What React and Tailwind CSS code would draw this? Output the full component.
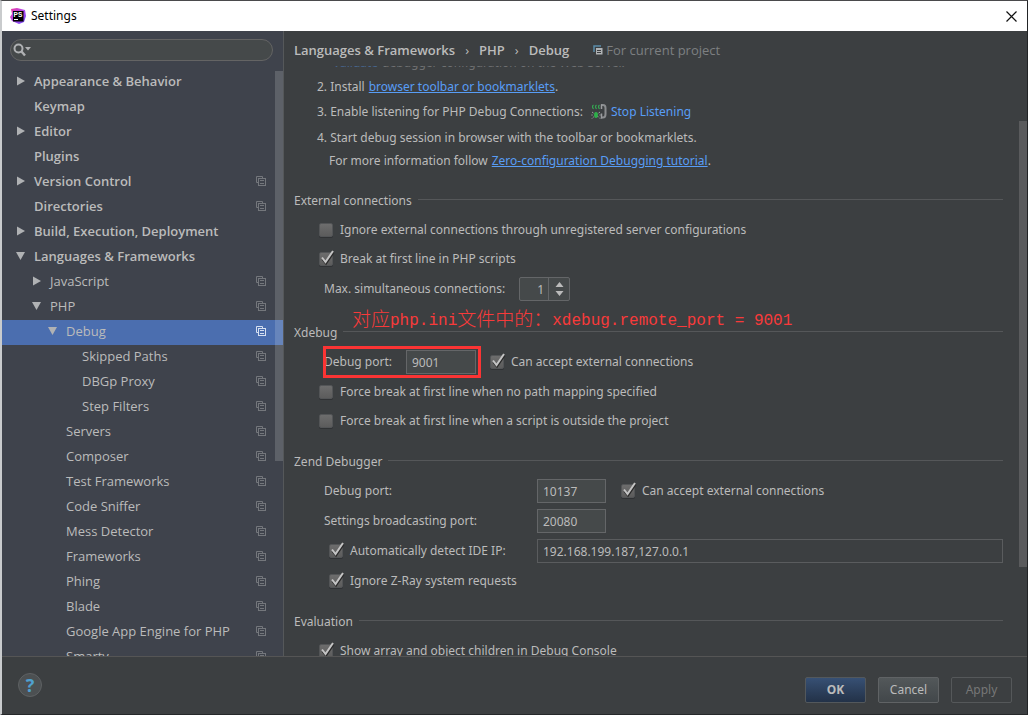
import React from 'react';

const treeItems = [
  { label: 'Appearance & Behavior', level: 0, arrow: 'right' },
  { label: 'Keymap', level: 0 },
  { label: 'Editor', level: 0, arrow: 'right' },
  { label: 'Plugins', level: 0 },
  { label: 'Version Control', level: 0, arrow: 'right', project: true },
  { label: 'Directories', level: 0, project: true },
  { label: 'Build, Execution, Deployment', level: 0, arrow: 'right' },
  { label: 'Languages & Frameworks', level: 0, arrow: 'down' },
  { label: 'JavaScript', level: 1, arrow: 'right', project: true },
  { label: 'PHP', level: 1, arrow: 'down', project: true },
  { label: 'Debug', level: 2, arrow: 'down', project: true, selected: true },
  { label: 'Skipped Paths', level: 3, project: true },
  { label: 'DBGp Proxy', level: 3, project: true },
  { label: 'Step Filters', level: 3, project: true },
  { label: 'Servers', level: 2, project: true },
  { label: 'Composer', level: 2, project: true },
  { label: 'Test Frameworks', level: 2, project: true },
  { label: 'Code Sniffer', level: 2, project: true },
  { label: 'Mess Detector', level: 2, project: true },
  { label: 'Frameworks', level: 2, project: true },
  { label: 'Phing', level: 2, project: true },
  { label: 'Blade', level: 2, project: true },
  { label: 'Google App Engine for PHP', level: 2, project: true },
  { label: 'Smarty', level: 2, project: true },
];

const levelPadding = ['pl-2.5', 'pl-6.5', 'pl-10.5', 'pl-14.5'];

const Arrow = ({ direction }) => (
  <svg width="16" height="12" viewBox="0 0 16 12" className="shrink-0" fill="#b0b2b4">
    {direction === 'right' && <path d="M5 1.5 L13 6 L5 10.5 Z" />}
    {direction === 'down' && <path d="M4 2 H13 L8.5 10 Z" />}
  </svg>
);

const ProjectIcon = ({ selected }) => (
  <svg width="10" height="10" viewBox="0 0 10 10" className="shrink-0" fill="none" stroke={selected ? '#d5dff0' : '#74777c'}>
    <path d="M2 6.5 H0.5 V0.5 H6.5 V2" />
    <rect x="2.5" y="2.5" width="7" height="7" />
    <path d="M4 4.5 H8 M4 7.5 H8" />
  </svg>
);

const AppLogo = () => (
  <svg width="16" height="16" viewBox="0 0 16 16">
    <defs>
      <linearGradient id="logo" x1="0" y1="0" x2="1" y2="1">
        <stop offset="0" stopColor="#f0369a" />
        <stop offset="0.5" stopColor="#b14af0" />
        <stop offset="1" stopColor="#6b45f5" />
      </linearGradient>
    </defs>
    <path d="M1 1 L7 0 L15 2 L16 8 L14 14 L9 16 L2 13 L0 9 L2 6 Z" fill="url(#logo)" />
    <rect x="3" y="3" width="10.500" height="10.500" fill="#000" />
    <text x="3.600" y="8.700" fontSize="6.500" fontWeight="700" fontFamily="Liberation Sans, sans-serif" fill="#fff">PS</text>
    <rect x="4" y="11" width="4" height="1" fill="#fff" />
  </svg>
);

const ListenIcon = () => (
  <svg width="16" height="16" viewBox="0 0 16 16" fill="none">
    <path d="M2.500 1 Q0.500 2.500 2.500 5 M5.500 1 Q3.500 2.500 5.500 5 M8.500 1 Q6.500 2.500 8.500 5" stroke="#35a853" strokeWidth="1.200" />
    <path d="M10 1 H12 Q14.500 1 14.500 4 V10 Q14.500 13.500 12 13.500 H10" stroke="#8b8d8f" strokeWidth="2" />
    <path d="M10.500 0.500 V5 M10.500 9.500 V14.500" stroke="#9b9d9f" strokeWidth="1.500" />
    <ellipse cx="5" cy="11" rx="2" ry="3" fill="#2fae4a" />
    <path d="M1 8 L3 9.500 M0.500 11 H2.500 M1 14.500 L3 12.500 M9 8 L7 9.500 M9.500 11 H7.500 M9 14.500 L7 12.500" stroke="#b5b8ba" strokeDasharray="1 1" />
  </svg>
);

const Check = ({ label, checked = false }) => (
  <label className="flex items-center gap-[7px]">
    <span className="relative flex">
      <input
        type="checkbox"
        defaultChecked={checked}
        className="peer size-[14px] appearance-none rounded-xs border border-[#535557] bg-linear-to-b from-[#6d6d6d] to-[#5c5c5c] shadow-[0_1px_0_#303234]"
      />
      <svg width="16" height="16" viewBox="0 0 16 16" fill="none" className="pointer-events-none absolute -top-0.5 left-0 hidden peer-checked:block">
        <path d="M3.500 9 L7 13.500 L14.500 2.500" stroke="#2a2a2a" strokeWidth="2.200" />
        <path d="M3 7.500 L6.500 12 L14 1" stroke="#c4c4c4" strokeWidth="2" />
      </svg>
    </span>
    {label}
  </label>
);

const SectionTitle = ({ children }) => (
  <div className="flex h-5 items-center gap-1.5">
    <h2>{children}</h2>
    <div className="mb-1 h-px flex-1 bg-[#555759]" />
  </div>
);

const fieldClass = 'h-6 border border-[#646668] bg-[#45494a] px-[5px] outline-none';

export default function App() {
  return (
    <div className="flex h-screen flex-col border-t border-r border-b border-l-2 border-t-[#4a4a4c] border-r-[#222426] border-b-[#26282a] border-l-[#c9cbcd] bg-[#3c3f41] font-['Open_Sans','Noto_Sans_CJK_SC',sans-serif] text-[13px] leading-5 text-[#bbbbbb]">
      {/* Title bar */}
      <header className="flex h-[30px] shrink-0 items-center gap-[5px] bg-white pr-2.5 pl-2 text-black">
        <AppLogo />
        <h1 className="flex-1 font-['Noto_Sans',sans-serif] text-xs">Settings</h1>
        <button aria-label="Close" className="p-0">
          <svg width="11" height="11" viewBox="0 0 11 11" stroke="#111" strokeWidth="1.200">
            <path d="M0.500 0.500 L10.500 10.500 M10.500 0.500 L0.500 10.500" />
          </svg>
        </button>
      </header>

      <div className="flex min-h-0 flex-1">
        {/* Settings tree */}
        <aside className="relative flex w-[282px] shrink-0 flex-col gap-[9px] overflow-hidden border-r border-[#55585a] bg-[#3f434c] pt-2">
          <div className="mr-2.5 ml-2 flex h-[22px] shrink-0 items-center rounded-full border border-[#646464] bg-[#45494a] pl-0.5">
            <svg width="18" height="14" viewBox="0 0 18 14" fill="none">
              <circle cx="5.500" cy="5.500" r="4" stroke="#afb1b3" strokeWidth="2" />
              <path d="M8.500 8.500 L12 12.500" stroke="#afb1b3" strokeWidth="2.400" />
              <path d="M12 4 H18 L15 7.500 Z" fill="#afb1b3" />
            </svg>
            <input type="search" aria-label="Search settings" className="min-w-0 flex-1 bg-transparent px-1 outline-none" />
          </div>
          <ul className="min-h-0 flex-1">
            {treeItems.map((item) => (
              <li
                key={item.label}
                className={`flex h-[25px] items-center pr-[17px] pb-[3px] ${levelPadding[item.level]} ${item.selected ? 'bg-[#4b6eaf]' : ''}`}
              >
                <Arrow direction={item.arrow} />
                <span className={`ml-1.5 flex-1 whitespace-nowrap ${item.level === 0 ? 'font-semibold' : ''}`}>{item.label}</span>
                {item.project && <ProjectIcon selected={item.selected} />}
              </li>
            ))}
          </ul>
          <div className="absolute top-10 right-0 h-[390px] w-2 bg-white/16" />
        </aside>

        {/* Debug page */}
        <main className="relative flex min-w-0 flex-1 flex-col overflow-hidden pl-2.5 font-['Noto_Sans','Noto_Sans_CJK_SC',sans-serif] text-xs leading-5">
          <nav className="flex h-[35px] shrink-0 items-center gap-2.5 pt-[3px] font-['Open_Sans',sans-serif] text-[13px] font-semibold">
            <span>Languages &amp; Frameworks</span>
            <span className="font-normal">›</span>
            <span>PHP</span>
            <span className="font-normal">›</span>
            <span>Debug</span>
            <span className="ml-3.5 flex items-center gap-[3px] font-normal text-[#7d7f81]">
              <svg width="10" height="10" viewBox="0 0 10 10" fill="none">
                <path d="M1 7 V1 H8" stroke="#5a8ca8" strokeWidth="1.500" />
                <rect x="3" y="3" width="6.500" height="6.500" fill="#b0b3b5" />
                <path d="M4 5.500 H8 M4 7.500 H8" stroke="#3c3f41" />
              </svg>
              For current project
            </span>
          </nav>

          <div className="min-h-0 flex-1 overflow-hidden pr-6">
            <div className="-mt-[15px] pl-[23px]">
              <p className="flex h-6 items-center pl-4 opacity-40">
                <a href="#validate" className="mr-1 text-[#589df6]">Validate</a> debugger configuration on the Web Server.
              </p>
              <p className="flex h-6 items-center">
                2. Install
                <a href="#toolbar" className="ml-1 text-[#589df6] underline">browser toolbar or bookmarklets</a>.
              </p>
              <p className="flex h-[26px] items-center">
                3. Enable listening for PHP Debug Connections:
                <a href="#listen" className="ml-2 flex items-center gap-1 text-[#589df6]">
                  <ListenIcon />
                  Stop Listening
                </a>
              </p>
              <p className="flex h-[26px] items-center">4. Start debug session in browser with the toolbar or bookmarklets.</p>
              <p className="flex h-5 items-center pl-3">
                For more information follow
                <a href="#tutorial" className="ml-1 text-[#589df6] underline">Zero-configuration Debugging tutorial</a>.
              </p>
            </div>

            <section className="mt-5">
              <SectionTitle>External connections</SectionTitle>
              <div className="pt-1 pl-[25px]">
                <div className="flex h-[29px] items-center">
                  <Check label="Ignore external connections through unregistered server configurations" />
                </div>
                <div className="flex h-[29px] items-center">
                  <Check label="Break at first line in PHP scripts" checked />
                </div>
                <div className="flex h-8 items-center pl-[5px]">
                  <label htmlFor="max-connections" className="w-[195px]">Max. simultaneous connections:</label>
                  <div className="flex h-6 items-center rounded-xs border border-[#646668] bg-[#45494a]">
                    <input id="max-connections" defaultValue="1" className="h-full w-[29px] border-r border-[#646668] pr-1 text-right outline-none" />
                    <svg width="20" height="22" viewBox="0 0 20 22" fill="#bbbbbb">
                      <path d="M6.500 9 L10.500 4 L14.500 9 Z M6.500 13 H14.500 L10.500 18 Z" />
                    </svg>
                  </div>
                </div>
              </div>
            </section>

            <section className="relative mt-[18px]">
              <SectionTitle>Xdebug</SectionTitle>
              <p className="absolute -top-4 left-[58px] flex items-center font-['Liberation_Mono','Noto_Sans_CJK_SC',monospace] text-base whitespace-pre text-[#f83a3a]">
                <span className="text-[19px] font-light">对应</span>php.ini<span className="text-[19px] font-light">文件中的：</span>xdebug.remote_port = 9001
              </p>
              <div className="pt-1 pl-[25px]">
                <div className="flex h-[30px] items-center gap-[9px]">
                  <div className="relative flex items-center px-[5px]">
                    <label htmlFor="xdebug-port" className="w-[82px]">Debug port:</label>
                    <input id="xdebug-port" defaultValue="9001" className={`w-[70px] ${fieldClass}`} />
                    <div className="pointer-events-none absolute -inset-y-1 right-0 left-1 border-3 border-[#fb3434]" />
                  </div>
                  <Check label="Can accept external connections" checked />
                </div>
                <div className="flex h-[29px] items-center">
                  <Check label="Force break at first line when no path mapping specified" />
                </div>
                <div className="flex h-[30px] items-center">
                  <Check label="Force break at first line when a script is outside the project" />
                </div>
              </div>
            </section>

            <section className="mt-4">
              <SectionTitle>Zend Debugger</SectionTitle>
              <div className="pt-1 pl-[30px]">
                <div className="flex h-[30px] items-center">
                  <label htmlFor="zend-port" className="w-[213px]">Debug port:</label>
                  <input id="zend-port" defaultValue="10137" className={`mr-[15px] w-[69px] ${fieldClass}`} />
                  <Check label="Can accept external connections" checked />
                </div>
                <div className="flex h-[30px] items-center">
                  <label htmlFor="broadcast-port" className="w-[213px]">Settings broadcasting port:</label>
                  <input id="broadcast-port" defaultValue="20080" className={`w-[69px] ${fieldClass}`} />
                </div>
                <div className="flex h-[30px] items-center">
                  <div className="w-[213px] shrink-0 pl-[5px]">
                    <Check label="Automatically detect IDE IP:" checked />
                  </div>
                  <input
                    aria-label="IDE IP"
                    readOnly
                    defaultValue="192.168.199.187,127.0.0.1"
                    className="h-6 min-w-0 flex-1 border border-[#5a5c5e] px-[5px] outline-none"
                  />
                </div>
                <div className="flex h-[30px] items-center pl-[5px]">
                  <Check label="Ignore Z-Ray system requests" checked />
                </div>
              </div>
            </section>

            <section className="mt-4">
              <SectionTitle>Evaluation</SectionTitle>
              <div className="flex h-[33px] items-center pt-1 pl-[25px]">
                <Check label="Show array and object children in Debug Console" checked />
              </div>
            </section>
          </div>
          <div className="absolute top-[90px] right-0 h-[446px] w-2 bg-[#5a5b5d]" />
        </main>
      </div>

      {/* Dialog buttons */}
      <footer className="flex h-[58px] shrink-0 items-start border-t border-[#555555] pr-[15px] pl-4">
        <button aria-label="Help" className="mt-4 flex size-6 items-center justify-center rounded-full border border-[#5e6163] bg-[#4c5052] text-lg font-bold text-[#4fa0cf]">
          ?
        </button>
        <div className="mt-5 ml-auto flex gap-3 font-['Noto_Sans',sans-serif] text-xs">
          <button className="h-[26px] w-[61px] rounded-xs border border-[#53585c] bg-linear-to-b from-[#375074] to-[#233248] font-bold">OK</button>
          <button className="h-[26px] w-[61px] rounded-xs border border-[#606365] bg-linear-to-b from-[#53585a] to-[#42474a]">Cancel</button>
          <button disabled className="h-[26px] w-[61px] rounded-xs border border-[#55585a] text-[#777777]">Apply</button>
        </div>
      </footer>
    </div>
  );
}
